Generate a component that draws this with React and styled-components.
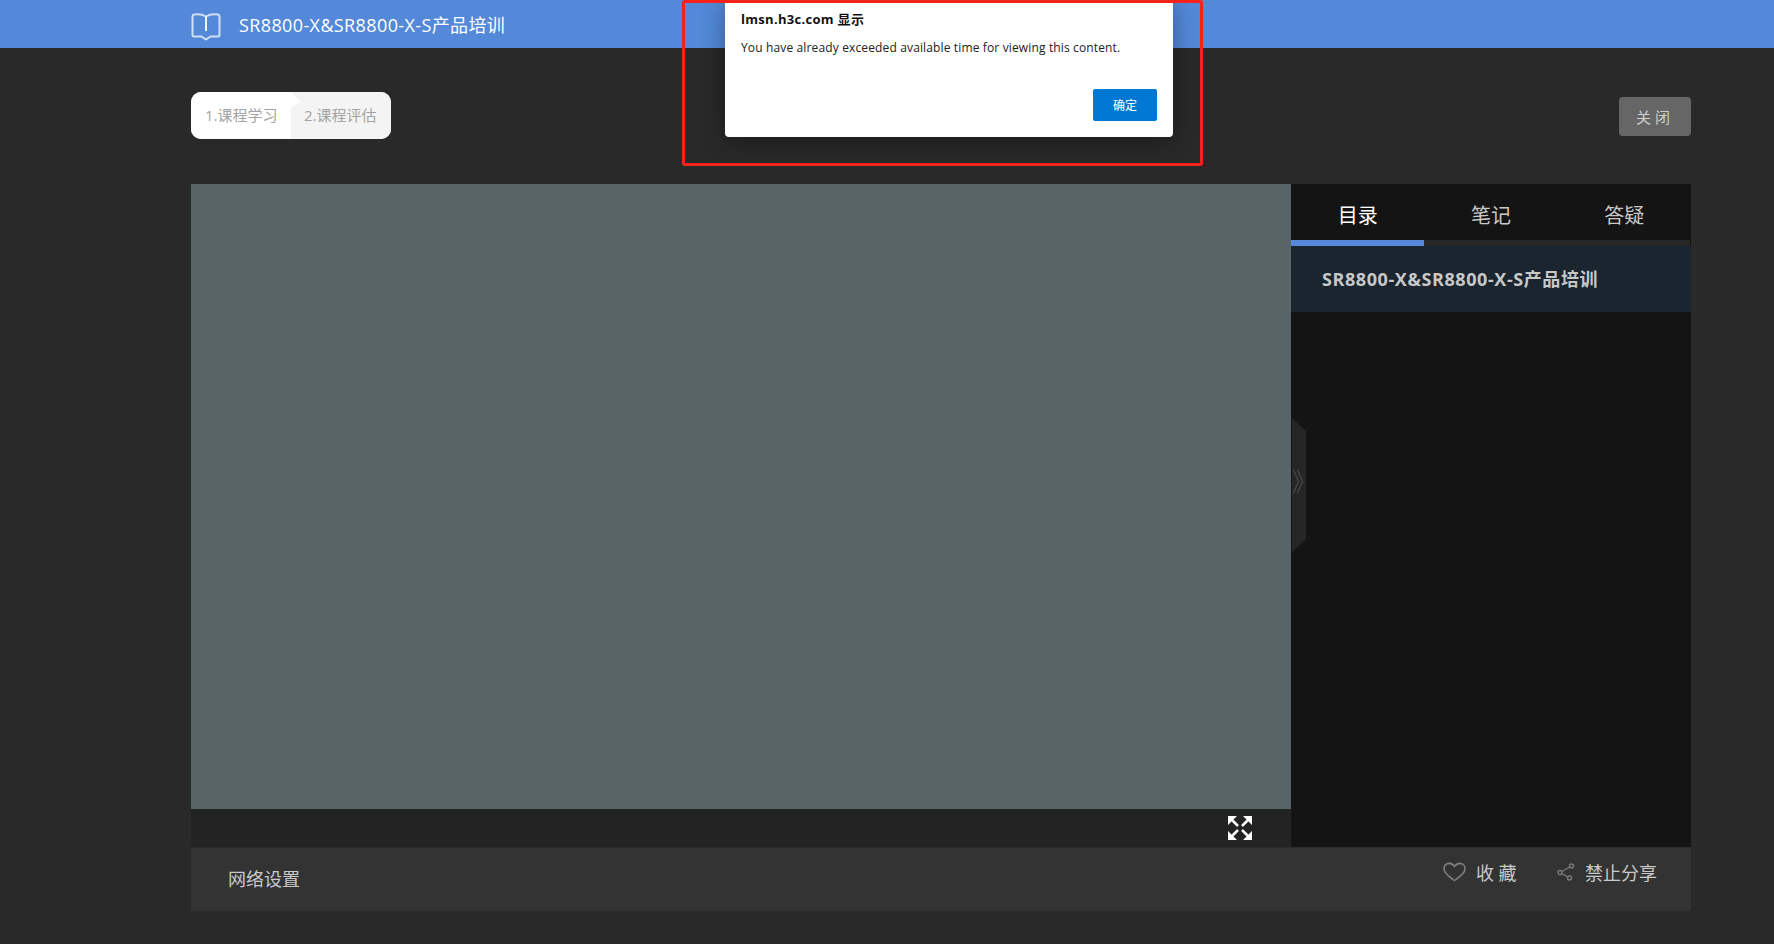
import React from "react"
import styled, { createGlobalStyle } from "styled-components"

const sans = `"Open Sans", "Noto Sans CJK SC", sans-serif`

const GlobalStyle = createGlobalStyle`
  html, body {
    margin: 0;
    padding: 0;
    height: 100%;
    background: #292929;
    font-family: ${sans};
    overflow: hidden;
  }
`

const Page = styled.div`
  position: relative;
  width: 1774px;
  height: 944px;
  background: #292929;
  overflow: hidden;
`

const Header = styled.header`
  display: flex;
  align-items: center;
  gap: 18px;
  height: 48px;
  padding-left: 191px;
  background: #5389d8;

  svg {
    margin-top: 5px;
  }
`

const HeaderTitle = styled.h1`
  margin: 0;
  font-size: 18px;
  font-weight: 400;
  letter-spacing: 0.38px;
  color: #fff;
`

const Content = styled.main`
  width: 1500px;
  margin-left: 191px;
`

const TopRow = styled.div`
  display: flex;
  align-items: center;
  justify-content: space-between;
  height: 136px;
`

const Steps = styled.div`
  display: flex;
  width: 200px;
  height: 47px;
  margin-bottom: 2px;
  border-radius: 10px;
  overflow: hidden;
  background: #f4f4f4;
`

const Step = styled.div`
  position: relative;
  display: flex;
  align-items: center;
  width: ${props => props.$width}px;
  padding-left: ${props => props.$indent}px;
  padding-bottom: 2px;
  box-sizing: border-box;
  font-size: 15px;
  color: #a3a3a3;
  background: ${props => (props.$active ? "#fff" : "#f4f4f4")};

  ${props =>
    props.$active &&
    `z-index: 1;
    &::after {
      content: "";
      position: absolute;
      top: 0;
      left: 100%;
      border-style: solid;
      border-width: 10px 0 6px 10px;
      border-color: transparent transparent transparent #fff;
    }`}
`

const CloseButton = styled.button`
  width: 72px;
  height: 39px;
  border: 0;
  border-radius: 4px;
  background: #666;
  color: #cfcfcf;
  font-family: ${sans};
  font-size: 15px;
  letter-spacing: 4px;
`

const Player = styled.section`
  display: flex;
  height: 663px;
`

const VideoColumn = styled.div`
  display: flex;
  flex-direction: column;
  width: 1100px;
`

const Video = styled.div`
  height: 625px;
  background: #586465;
`

const Controls = styled.div`
  display: flex;
  align-items: center;
  justify-content: flex-end;
  height: 38px;
  padding-right: 39px;
  background: #232323;
`

const Sidebar = styled.aside`
  position: relative;
  width: 400px;
  background: #141414;
`

const Tabs = styled.div`
  display: flex;
  height: 56px;
`

const Tab = styled.div`
  flex: 1;
  display: flex;
  align-items: center;
  justify-content: center;
  padding-top: 4px;
  font-size: 20px;
  color: ${props => (props.$active ? "#fff" : "#c9c9c9")};
`

const TabTrack = styled.div`
  height: 6px;
  margin-right: 1px;
  background: #262626;
`

const TabIndicator = styled.div`
  width: 133px;
  height: 100%;
  background: #5389d8;
`

const CourseRow = styled.div`
  display: flex;
  align-items: center;
  height: 66px;
  padding: 0 0 2px 31px;
  box-sizing: border-box;
  background: #1a2530;
  font-size: 18px;
  font-weight: 700;
  letter-spacing: 0.58px;
  color: #c8c8c8;
`

const Collapse = styled.div`
  position: absolute;
  top: 234px;
  left: 0;
  display: flex;
`

const BottomBar = styled.div`
  display: flex;
  align-items: center;
  justify-content: space-between;
  height: 63px;
  padding: 0 34px 0 37px;
  border-top: 1px solid #2c2c2c;
  background: #333;
  font-size: 18px;
  color: #c9c9c9;
`

const NetworkLink = styled.span`
  margin-top: -4px;
`

const Actions = styled.div`
  display: flex;
  align-items: center;
  margin-top: -15px;
`

const Action = styled.div`
  display: flex;
  align-items: center;
  gap: ${props => props.$gap}px;
  margin-left: ${props => props.$offset || 0}px;
  letter-spacing: ${props => props.$spacing || 0}px;
`

const DialogFrame = styled.div`
  position: absolute;
  top: 0;
  left: 682px;
  width: 521px;
  height: 166px;
  box-sizing: border-box;
  border: 3px solid #f5231a;
  border-radius: 3px;
`

const Dialog = styled.div`
  position: absolute;
  top: 0;
  left: 725px;
  display: flex;
  flex-direction: column;
  width: 448px;
  height: 137px;
  box-sizing: border-box;
  padding: 9px 16px 16px;
  border-radius: 0 0 4px 4px;
  background: #fff;
  box-shadow: 0 4px 24px rgba(0, 0, 0, 0.35);
`

const DialogTitle = styled.div`
  font-size: 13px;
  font-weight: 700;
  letter-spacing: 0.3px;
  color: #111;
`

const DialogText = styled.p`
  margin: 11px 0 0;
  font-size: 12px;
  letter-spacing: 0.14px;
  color: #222;
`

const ConfirmButton = styled.button`
  align-self: flex-end;
  width: 64px;
  height: 32px;
  margin-top: auto;
  border: 0;
  border-radius: 2px;
  background: #0078d4;
  color: #fff;
  font-family: ${sans};
  font-size: 12px;
`

const BookIcon = () => (
  <svg width="30" height="28" viewBox="0 0 30 28" fill="none" strokeLinejoin="round">
    <path
      d="M15 3.500C11 1 6 1 3 1.500 1.800 1.800 1.500 2.500 1.500 3.500V22c0 1 .5 1.500 1.500 1.500h7.500l4.500 3 4.500-3H27c1 0 1.500-.5 1.500-1.500V3.500c0-1-.3-1.700-1.500-2C24 1 19 1 15 3.500z"
      stroke="#cfe0f7"
      strokeWidth="2"
    />
    <path d="M15 3.500V18" stroke="#eef4fd" strokeWidth="2" />
  </svg>
)

const ExpandIcon = () => (
  <svg width="24" height="24" viewBox="0 0 24 24" fill="#fff" stroke="#fff">
    <path d="M0 0h9L0 9z" strokeWidth="0" />
    <path d="M24 0h-9l9 9z" strokeWidth="0" />
    <path d="M0 24h9l-9-9z" strokeWidth="0" />
    <path d="M24 24h-9l9-9z" strokeWidth="0" />
    <path d="M3 3l7 7 M21 3l-7 7 M3 21l7-7 M21 21l-7-7" strokeWidth="2.500" />
  </svg>
)

const HeartIcon = () => (
  <svg width="23" height="20" viewBox="0 0 24 20" fill="none" stroke="#808080" strokeWidth="1.6">
    <path d="M12 19C6 14.5 1 11 1 6.3 1 3.2 3.4 1 6.3 1c2.4 0 4.4 1.2 5.7 3.2C13.300 2.200 15.300 1 17.700 1 20.600 1 23 3.200 23 6.300 23 11 18 14.500 12 19z" />
  </svg>
)

const ShareIcon = () => (
  <svg width="18" height="18" viewBox="0 0 18 18" fill="none" stroke="#7a7a7a" strokeWidth="1.4">
    <circle cx="14.500" cy="3" r="2" />
    <circle cx="3" cy="9.500" r="2" />
    <circle cx="12.500" cy="15" r="2" />
    <path d="M4.800 8.500l8-4.500 M4.800 10.500l6 3.500" />
  </svg>
)

const CollapseHandle = () => (
  <svg width="15" height="134" viewBox="0 0 15 134" fill="none">
    <path d="M1 0l14 13v108L1 134z" fill="#262626" />
    <path d="M2.500 52l5 11.500-5 11.500 M6.500 52l5 11.500-5 11.500" stroke="#434343" strokeWidth="1.500" />
  </svg>
)

const App = () => {
  return (
    <Page>
      <GlobalStyle />
      <Header>
        <BookIcon />
        <HeaderTitle>SR8800-X&amp;SR8800-X-S产品培训</HeaderTitle>
      </Header>
      <Content>
        <TopRow>
          <Steps>
            <Step $active $width={100} $indent={14}>1.课程学习</Step>
            <Step $width={100} $indent={13}>2.课程评估</Step>
          </Steps>
          <CloseButton>关闭</CloseButton>
        </TopRow>
        <Player>
          <VideoColumn>
            <Video />
            <Controls>
              <ExpandIcon />
            </Controls>
          </VideoColumn>
          <Sidebar>
            <Tabs>
              <Tab $active>目录</Tab>
              <Tab>笔记</Tab>
              <Tab>答疑</Tab>
            </Tabs>
            <TabTrack>
              <TabIndicator />
            </TabTrack>
            <CourseRow>SR8800-X&amp;SR8800-X-S产品培训</CourseRow>
            <Collapse>
              <CollapseHandle />
            </Collapse>
          </Sidebar>
        </Player>
        <BottomBar>
          <NetworkLink>网络设置</NetworkLink>
          <Actions>
            <Action $gap={10} $spacing={4.5}>
              <HeartIcon />
              收藏
            </Action>
            <Action $gap={10} $offset={36}>
              <ShareIcon />
              禁止分享
            </Action>
          </Actions>
        </BottomBar>
      </Content>
      <Dialog>
        <DialogTitle>lmsn.h3c.com 显示</DialogTitle>
        <DialogText>You have already exceeded available time for viewing this content.</DialogText>
        <ConfirmButton>确定</ConfirmButton>
      </Dialog>
      <DialogFrame />
    </Page>
  )
}

export default App
